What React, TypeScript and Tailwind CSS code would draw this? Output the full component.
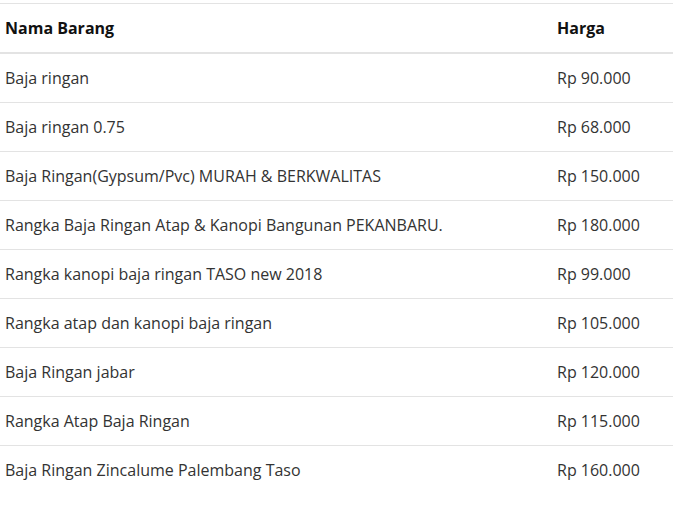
import React from "react";

const items = [
  { name: "Baja ringan", price: "Rp 90.000" },
  { name: "Baja ringan 0.75", price: "Rp 68.000" },
  { name: "Baja Ringan(Gypsum/Pvc) MURAH & BERKWALITAS", price: "Rp 150.000" },
  { name: "Rangka Baja Ringan Atap & Kanopi Bangunan PEKANBARU.", price: "Rp 180.000" },
  { name: "Rangka kanopi baja ringan TASO new 2018", price: "Rp 99.000" },
  { name: "Rangka atap dan kanopi baja ringan", price: "Rp 105.000" },
  { name: "Baja Ringan jabar", price: "Rp 120.000" },
  { name: "Rangka Atap Baja Ringan", price: "Rp 115.000" },
  { name: "Baja Ringan Zincalume Palembang Taso", price: "Rp 160.000" },
];

export default function App() {
  return (
    <div className="min-h-[505px] bg-white pt-[3px] font-['Open_Sans',sans-serif] text-[16px] leading-[24px] text-[#333]">
      <table className="w-full border-collapse">
        <colgroup>
          <col className="w-[552px]" />
          <col />
        </colgroup>
        <thead>
          <tr className="border-t border-[#e3e3e3]">
            <th className="border-b-2 border-[#e3e3e3] py-3 pl-[5px] text-left font-bold text-[#111]">
              Nama Barang
            </th>
            <th className="border-b-2 border-[#e3e3e3] py-3 pl-[5px] text-left font-bold text-[#111]">
              Harga
            </th>
          </tr>
        </thead>
        <tbody>
          {items.map((item, i) => (
            <tr key={i} className={i === 0 ? "" : "border-t border-[#e3e3e3]"}>
              <td className="py-3 pl-[5px]">{item.name}</td>
              <td className="py-3 pl-[5px]">{item.price}</td>
            </tr>
          ))}
        </tbody>
      </table>
    </div>
  );
}
